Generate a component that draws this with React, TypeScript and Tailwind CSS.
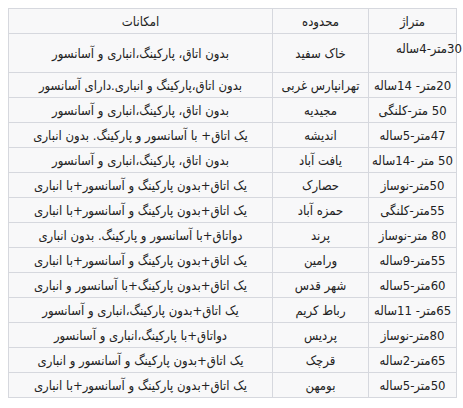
// Rental listings table (RTL, Persian) — wikitable-like styling.

type Row = {
  size: string
  area: string
  features: string
}

const ROWS: Row[] = [
  { size: "20متر- 14ساله", area: "تهرانپارس غربی", features: "بدون اتاق،پارکینگ و انباری.دارای آسانسور" },
  { size: "50 متر-کلنگی", area: "مجیدیه", features: "بدون اتاق، پارکینگ،انباری و آسانسور" },
  { size: "47متر-5ساله", area: "اندیشه", features: "یک اتاق+ با آسانسور و پارکینگ. بدون انباری" },
  { size: "50 متر -14ساله", area: "یافت آباد", features: "بدون اتاق، پارکینگ،انباری و آسانسور" },
  { size: "50متر-نوساز", area: "حصارک", features: "یک اتاق+بدون پارکینگ و آسانسور+با انباری" },
  { size: "55متر-کلنگی", area: "حمزه آباد", features: "یک اتاق+بدون پارکینگ و آسانسور+با انباری" },
  { size: "80 متر-نوساز", area: "پرند", features: "دواتاق+با آسانسور و پارکینگ. بدون انباری" },
  { size: "55متر-9ساله", area: "ورامین", features: "یک اتاق+بدون پارکینگ و آسانسور+با انباری" },
  { size: "60متر-5ساله", area: "شهر قدس", features: "یک اتاق+بدون پارکینگ+با آسانسور و انباری" },
  { size: "65متر- 11ساله", area: "رباط کریم", features: "یک اتاق+بدون پارکینگ،انباری و آسانسور" },
  { size: "80متر-نوساز", area: "پردیس", features: "دواتاق+با پارکینگ،انباری و آسانسور" },
  { size: "65متر-2ساله", area: "قرچک", features: "یک اتاق+بدون پارکینگ و آسانسور و انباری" },
  { size: "50متر-5ساله", area: "بومهن", features: "یک اتاق+بدون پارکینگ و آسانسور+با انباری" },
]

const cell =
  "border border-[#d6d8de] bg-[#f8f8f9] p-0 text-center align-middle whitespace-nowrap"

export default function App() {
  return (
    <div className="min-h-[408px] bg-white pt-2 pl-2 text-[13px] leading-[17px] text-[#222] [font-family:'DejaVu_Sans_Condensed','DejaVu_Sans',sans-serif] [font-stretch:condensed]">
      <table dir="rtl" className="w-[449px] table-fixed border-collapse">
        <colgroup>
          <col className="w-[88px]" />
          <col className="w-[96px]" />
          <col />
        </colgroup>
        <thead>
          <tr className="h-[25px]">
            <th className={cell + " font-normal"}>متراژ</th>
            <th className={cell + " font-normal"}>محدوده</th>
            <th className={cell + " font-normal"}>امکانات</th>
          </tr>
        </thead>
        <tbody>
          <tr className="h-[39px]">
            <td className="border border-[#d6d8de] bg-[#f8f8f9] p-0 pt-[6px] align-top whitespace-nowrap">
              <div className="-mr-[6px] text-right">30متر-4ساله</div>
            </td>
            <td className={cell}>خاک سفید</td>
            <td className={cell}>بدون اتاق، پارکینگ،انباری و آسانسور</td>
          </tr>
          {ROWS.map((r) => (
            <tr key={r.size + r.area} className="h-[25px]">
              <td className={cell}>{r.size}</td>
              <td className={cell}>{r.area}</td>
              <td className={cell}>{r.features}</td>
            </tr>
          ))}
        </tbody>
      </table>
    </div>
  )
}
